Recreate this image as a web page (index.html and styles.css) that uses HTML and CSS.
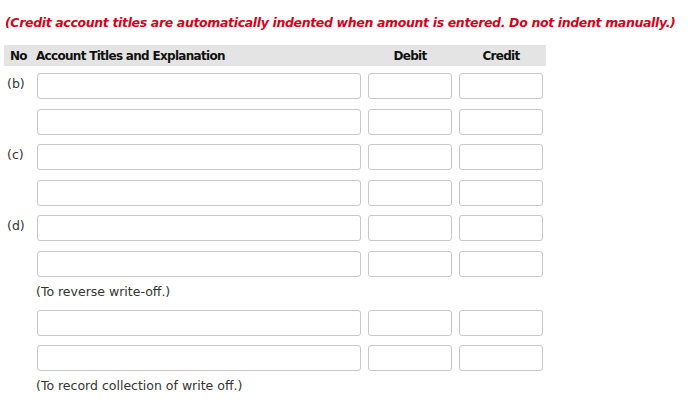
FILE: index.html
```html
<!DOCTYPE html>
<html>
<head>
<meta charset="utf-8">
<link rel="stylesheet" href="styles.css">
</head>
<body>
<p class="note-red">(Credit account titles are automatically indented when amount is entered. Do not indent manually.)</p>
<div class="journal">
  <div class="head">
    <div class="h-no">No</div>
    <div class="h-acct">Account Titles and Explanation</div>
    <div class="h-amt">Debit</div>
    <div class="h-amt">Credit</div>
  </div>
  <div class="row"><div class="lbl">(b)</div><input class="acct" type="text"><input class="amt" type="text"><input class="amt" type="text"></div>
  <div class="row"><div class="lbl"></div><input class="acct" type="text"><input class="amt" type="text"><input class="amt" type="text"></div>
  <div class="row"><div class="lbl">(c)</div><input class="acct" type="text"><input class="amt" type="text"><input class="amt" type="text"></div>
  <div class="row"><div class="lbl"></div><input class="acct" type="text"><input class="amt" type="text"><input class="amt" type="text"></div>
  <div class="row"><div class="lbl">(d)</div><input class="acct" type="text"><input class="amt" type="text"><input class="amt" type="text"></div>
  <div class="row last"><div class="lbl"></div><input class="acct" type="text"><input class="amt" type="text"><input class="amt" type="text"></div>
  <div class="expl">(To reverse write-off.)</div>
  <div class="row"><div class="lbl"></div><input class="acct" type="text"><input class="amt" type="text"><input class="amt" type="text"></div>
  <div class="row last"><div class="lbl"></div><input class="acct" type="text"><input class="amt" type="text"><input class="amt" type="text"></div>
  <div class="expl">(To record collection of write off.)</div>
</div>
</body>
</html>
```
FILE: styles.css
```css
html, body {
  margin: 0;
  padding: 0;
  background: #ffffff;
}
body {
  font-family: "DejaVu Sans", Verdana, sans-serif;
  font-size: 12.5px;
  color: #333333;
}
.note-red {
  margin: 0;
  padding: 15px 0 0 5px;
  height: 16px;
  line-height: 16px;
  font-size: 12.5px;
  font-weight: bold;
  font-style: italic;
  letter-spacing: -0.35px;
  color: #d0021b;
  white-space: nowrap;
}
.journal {
  margin: 14px 0 0 4px;
  width: 542px;
}
.head {
  display: grid;
  grid-template-columns: 26px 324px 84px 84px;
  column-gap: 7px;
  padding-right: 3px;
  box-sizing: border-box;
  height: 21px;
  padding-top: 1px;
  line-height: 20px;
  background: #e4e4e4;
  font-size: 12px;
  font-weight: bold;
  letter-spacing: -0.7px;
  color: #111111;
}
.h-no {
  padding-left: 6px;
}
.h-acct {
  margin-left: -1px;
}
.h-amt {
  text-align: center;
}
.row {
  display: grid;
  grid-template-columns: 26px 324px 84px 84px;
  column-gap: 7px;
  margin-top: 9.5px;
}
.head + .row {
  margin-top: 7px;
}
.lbl {
  padding: 3px 0 0 3px;
  line-height: 16px;
}
input {
  box-sizing: border-box;
  height: 26px;
  margin: 0;
  padding: 2px 4px;
  border: 1px solid #c8c8c8;
  border-radius: 3px;
  background: #ffffff;
  font: inherit;
}
.expl {
  margin: 7px 0 0 32px;
  line-height: 16px;
}
.expl + .row {
  margin-top: 10px;
}
```
